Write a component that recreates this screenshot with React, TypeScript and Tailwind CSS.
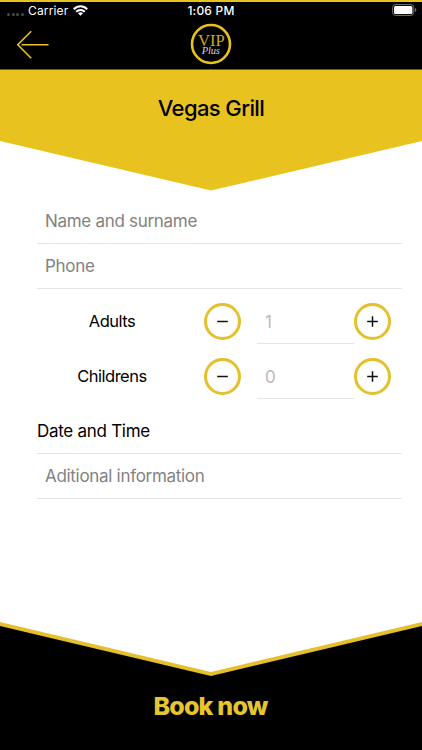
import React from "react";

const StatusBar = () => {
  return (
    <div className="h-[17px] flex items-center text-white text-[12px]">
      <div className="w-[140px] flex items-center pl-[7px]">
        <div className="flex gap-[1.5px] pt-[7px]">
          {[0, 1, 2, 3].map((dot) => (
            <span key={dot} className="size-[3px] rounded-full bg-[#4a4a4a]" />
          ))}
        </div>
        <span className="ml-[4.5px] tracking-[0.15px]">Carrier</span>
        <svg width="15" height="11" viewBox="0 0 15 11" className="ml-[5px]">
          <g fill="none" stroke="white" strokeWidth="2">
            <path d="M0.8 4.2 C4.5 0.4 10.5 0.4 14.2 4.2" />
            <path d="M3.2 6.7 C5.6 4.3 9.4 4.3 11.8 6.7" />
          </g>
          <path d="M7.5 10.8 L5 8.3 C6.4 7 8.6 7 10 8.3 Z" fill="white" />
        </svg>
      </div>
      <span className="flex-1 text-center tracking-[0.2px] font-medium">
        1:06 PM
      </span>
      <div className="w-[140px] flex justify-end pr-[5px] -mt-px">
        <svg width="25" height="12" viewBox="0 0 25 12">
          <rect x="0.6" y="0.6" width="21.2" height="10.8" rx="3" fill="none" stroke="#777" />
          <rect x="2" y="2" width="18.4" height="8" rx="1.6" fill="white" />
          <path d="M23 4 C24.8 4.6 24.8 7.4 23 8 Z" fill="#777" />
        </svg>
      </div>
    </div>
  );
};

const Logo = () => {
  return (
    <svg width="42" height="42" viewBox="0 0 42 42" className="-mt-px">
      <circle cx="21" cy="21" r="19" fill="black" stroke="#e8c31f" strokeWidth="2.6" />
      <text
        x="8"
        y="23.4"
        fontSize="16.5"
        textLength="26.6"
        fill="#c9a82a"
        fontFamily="Liberation Serif, serif"
      >
        VIP
      </text>
      <text
        x="11.8"
        y="31.2"
        fontSize="10.5"
        textLength="18"
        fill="#d5d5d5"
        fontStyle="italic"
        fontFamily="Liberation Serif, serif"
      >
        Plus
      </text>
    </svg>
  );
};

const RoundButton = ({ plus }: { plus?: boolean }) => {
  return (
    <button className="size-[37px] shrink-0 rounded-full border-3 border-[#e4c02c] flex items-center justify-center">
      <svg width="11" height="11" viewBox="0 0 11 11" stroke="#111" strokeWidth="1.5">
        <path d={plus ? "M0.2 5.5 H10.8 M5.5 0.2 V10.8" : "M0.2 5.5 H10.8"} />
      </svg>
    </button>
  );
};

const CounterRow = ({ label, value }: { label: string; value: string }) => {
  return (
    <div className="h-[55px] flex items-center">
      <span className="w-[150px] text-center text-[16.5px] tracking-[-0.5px]">
        {label}
      </span>
      <div className="w-[17px]" />
      <RoundButton />
      <div className="ml-4 w-[97px] h-[45px] border-b border-[#e2e6e4] pl-2 pt-[3px] flex items-center text-[17px] text-[#b9b9b9]">
        {value}
      </div>
      <RoundButton plus />
    </div>
  );
};

const Field = ({ label }: { label: string }) => {
  return (
    <div className="h-[45px] border-b border-[#e4e4e4] pl-2 pt-[2px] flex items-center text-[17px] tracking-[-0.3px] text-[#828282]">
      {label}
    </div>
  );
};

const App = () => {
  return (
    <main className="w-[422px] h-[750px] bg-white flex flex-col overflow-hidden font-['Inter',sans-serif] text-black">
      <header className="h-[70px] shrink-0 bg-black border-t-2 border-[#e8c31f]">
        <StatusBar />
        <div className="h-[51px] flex items-center justify-between pl-4">
          <svg width="34" height="30" viewBox="0 0 34 30" className="mr-[140px]" fill="none" stroke="#e8c31f" strokeWidth="1.6">
            <path d="M15.2 1.3 L1.8 14.8 L15.2 28.3 M5.5 14.8 H32.5" />
          </svg>
          <Logo />
          <div className="flex-1" />
        </div>
      </header>

      <section className="h-[122px] shrink-0 bg-[#e8c31f] -mt-px pt-px [clip-path:polygon(0_0.5px,100%_0.5px,100%_72px,50%_121.5px,0_72px)]">
        <h1 className="pt-[22px] text-center text-[22px] leading-8 font-medium tracking-[-0.6px]">
          Vegas Grill
        </h1>
      </section>

      <section className="flex-1 pl-[37px] pr-5 pt-2">
        <Field label="Name and surname" />
        <Field label="Phone" />
        <div className="pt-[5px]">
          <CounterRow label="Adults" value="1" />
          <CounterRow label="Childrens" value="0" />
        </div>
        <div className="h-[50px] border-b border-[#e4e4e4] flex items-center pt-[7px] text-[17px] tracking-[-0.28px]">
          Date and Time
        </div>
        <Field label="Aditional information" />
      </section>

      <footer className="h-[128px] shrink-0 bg-[#e4c02c] [clip-path:polygon(0_0,50%_50px,100%_0,100%_100%,0_100%)]">
        <div className="h-full bg-black [clip-path:polygon(0_4px,50%_54px,100%_4px,100%_100%,0_100%)]">
          <button className="w-full pt-[68px] pr-px text-center text-[25px] leading-8 font-extrabold tracking-[-0.8px] text-[#e6c52f]">
            Book now
          </button>
        </div>
      </footer>
    </main>
  );
};

export default App;
